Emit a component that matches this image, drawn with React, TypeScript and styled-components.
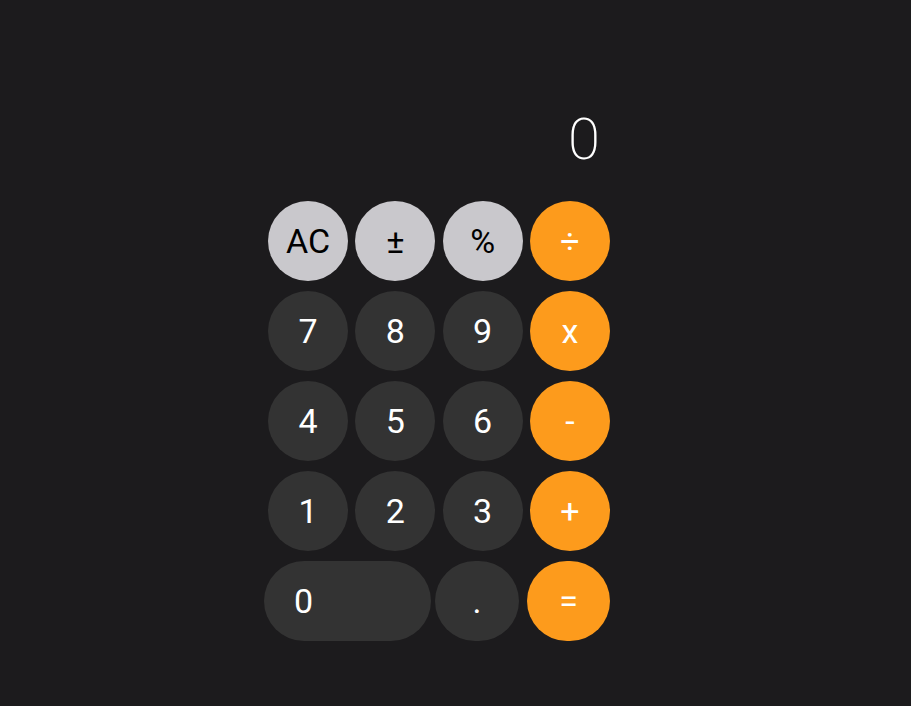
import styled, { createGlobalStyle } from 'styled-components'

const GlobalStyle = createGlobalStyle`
    html, body {
        margin: 0;
        padding: 0;
        background-color: #1c1b1d;
        font-family: Roboto, "Liberation Sans", sans-serif;
    }
`;

type Variant = 'light' | 'dark' | 'orange';

const colors: Record<Variant, { bg: string; fg: string }> = {
    light: { bg: '#c9c8cc', fg: '#000000' },
    dark: { bg: '#333333', fg: '#ffffff' },
    orange: { bg: '#fd9b1c', fg: '#ffffff' },
};

const Page = styled.div`
    min-height: 706px;
    padding: 96px 0 0 264px;
    box-sizing: border-box;
    background-color: #1c1b1d;
`;

const Calculator = styled.div`
    width: 346px;
    display: flex;
    flex-direction: column;
    gap: 10px;
`;

const Display = styled.div`
    height: 95px;
    padding: 0 10px 9px 0;
    box-sizing: border-box;
    display: flex;
    justify-content: flex-end;
    align-items: center;
    color: #ffffff;
    font-size: 58px;
    font-weight: 200;
    line-height: 1;
`;

const Row = styled.div<{ $inset?: boolean }>`
    display: flex;
    justify-content: space-between;
    padding-left: ${props => (props.$inset ? '4px' : '0')};
`;

const Key = styled.button<{ $variant: Variant; $width?: number; $alignLeft?: boolean }>`
    width: ${props => props.$width ?? 80}px;
    height: 80px;
    border: none;
    border-radius: 40px;
    padding: ${props => (props.$alignLeft ? '0 0 0 30px' : '0')};
    display: flex;
    align-items: center;
    justify-content: ${props => (props.$alignLeft ? 'flex-start' : 'center')};
    font-family: Roboto, "Liberation Sans", sans-serif;
    font-size: 34px;
    font-weight: 400;
    background-color: ${props => colors[props.$variant].bg};
    color: ${props => colors[props.$variant].fg};
    cursor: pointer;
`;

const BottomRow = styled.div`
    display: grid;
    grid-template-columns: 167px 84px 1fr;
    column-gap: 4px;
    justify-items: start;

    & > :last-child {
        justify-self: end;
    }
`;

const rows: { label: string; variant: Variant }[][] = [
    [
        { label: 'AC', variant: 'light' },
        { label: '±', variant: 'light' },
        { label: '%', variant: 'light' },
        { label: '÷', variant: 'orange' },
    ],
    [
        { label: '7', variant: 'dark' },
        { label: '8', variant: 'dark' },
        { label: '9', variant: 'dark' },
        { label: 'x', variant: 'orange' },
    ],
    [
        { label: '4', variant: 'dark' },
        { label: '5', variant: 'dark' },
        { label: '6', variant: 'dark' },
        { label: '-', variant: 'orange' },
    ],
    [
        { label: '1', variant: 'dark' },
        { label: '2', variant: 'dark' },
        { label: '3', variant: 'dark' },
        { label: '+', variant: 'orange' },
    ],
];

export default function App() {
    return (
        <>
            <GlobalStyle />
            <Page>
                <Calculator>
                    <Display>0</Display>
                    {rows.map((row, i) => (
                        <Row key={i} $inset>
                            {row.map(k => (
                                <Key key={k.label} $variant={k.variant}>
                                    {k.label}
                                </Key>
                            ))}
                        </Row>
                    ))}
                    <BottomRow>
                        <Key $variant="dark" $width={167} $alignLeft>
                            0
                        </Key>
                        <Key $variant="dark" $width={84}>
                            .
                        </Key>
                        <Key $variant="orange" $width={83}>
                            =
                        </Key>
                    </BottomRow>
                </Calculator>
            </Page>
        </>
    );
}
